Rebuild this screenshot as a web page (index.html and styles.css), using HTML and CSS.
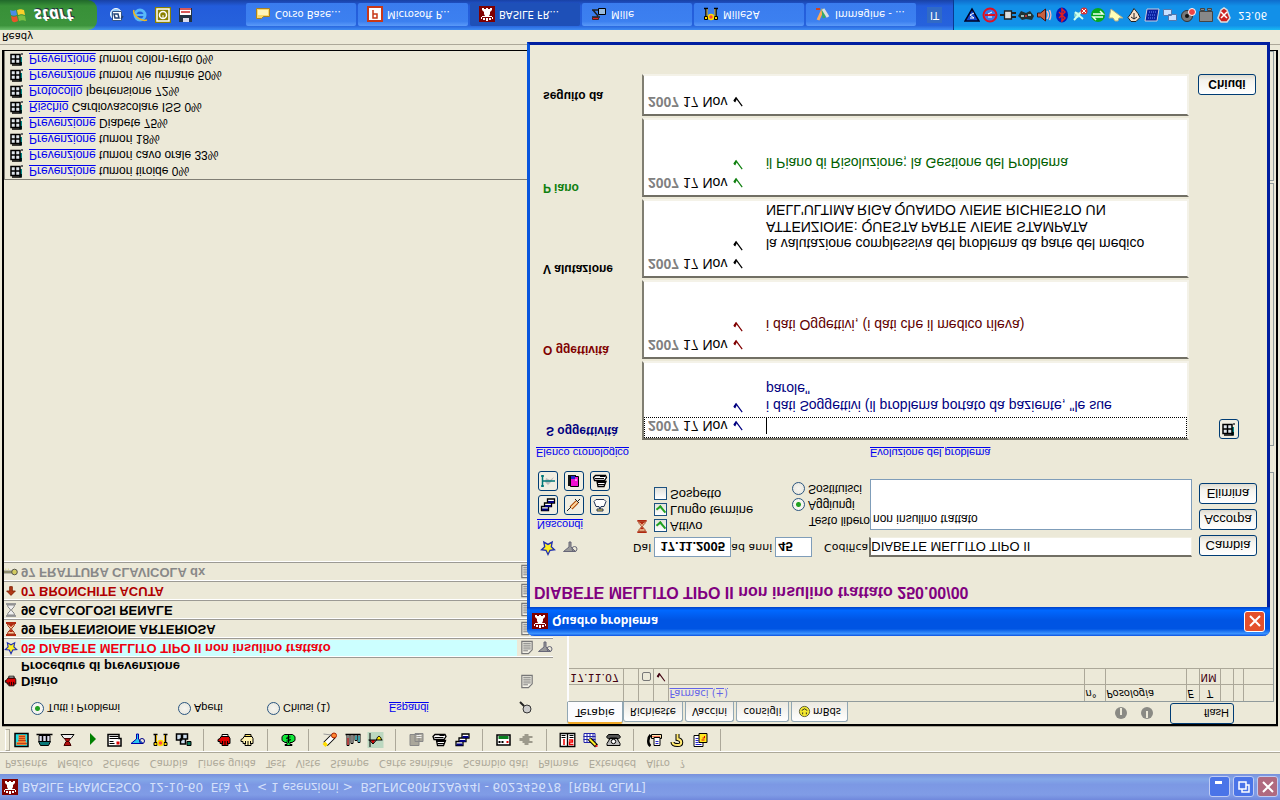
FILE: index.html
```html
<!DOCTYPE html>
<html lang="it">
<head>
<meta charset="utf-8">
<title>BASILE FRANCESCO - Quadro problema</title>
<link rel="stylesheet" href="styles.css">
</head>
<body>
<svg class="defs" aria-hidden="true">
  <symbol id="rook" viewBox="0 0 16 16"><path fill="#800000" d="M0 0h16v16H0z"/><path fill="#fff" d="M2 3h1v2H2zM4 2h2v2H4zM7 1h2v3H7zM10 2h2v2h-2zM13 3h1v2h-1zM3 5h10v1H3zM6 6h4l1 2v2l2 2v2h-2v-1H9v1H7v-1H5v1H3v-2l2-2V8z"/></symbol>
  <symbol id="win" viewBox="0 0 16 16"><path fill="#666" d="M12 12h2v2h-2z"/><path fill="#088" d="M10 2h3v8h-3z"/><path fill="#dfe6ec" stroke="#000" stroke-width="1.500" d="M2 3.500h9v9H2z"/><path stroke="#000" stroke-width="1.500" d="M6.500 3v10M2 8h9M3 2h9v3"/></symbol>
  <symbol id="star" viewBox="0 0 16 16"><path fill="#ffef20" stroke="#2030b0" stroke-width="1.300" d="M8 1.500l2 4.200 4.500.6-3.200 3 .9 4.600L8 11.600l-4.200 2.300.9-4.600-3.200-3 4.500-.6z"/></symbol>
  <symbol id="hgred" viewBox="0 0 12 16"><path fill="#b22810" d="M1 1h10v2H1zM1 13h10v2H1z"/><path fill="#f7c9a0" stroke="#a03818" d="M2.500 3c0 3 3 3.500 3 5s-3 2-3 5h7c0-3-3-3.500-3-5s3-2 3-5z"/><path fill="#b22810" d="M4 5h4L6 8zM3 13l3-3 3 3z"/></symbol>
  <symbol id="hggray" viewBox="0 0 12 16"><path fill="#999" d="M1 1h10v2H1zM1 13h10v2H1z"/><path fill="#eee" stroke="#888" d="M2.500 3c0 3 3 3.500 3 5s-3 2-3 5h7c0-3-3-3.500-3-5s3-2 3-5z"/></symbol>
  <symbol id="uparrow" viewBox="0 0 16 16"><path fill="#b03818" stroke="#802000" d="M8 3l5 5H9.500v5h-3V8H3z"/></symbol>
  <symbol id="key" viewBox="0 0 16 16"><path fill="none" stroke="#555" stroke-width="3" d="M0 8h9"/><path stroke="#d8d890" d="M0 8h9M2 10v2M5 10v2"/><circle cx="12" cy="8" r="3.200" fill="#d4cc60" stroke="#444"/><circle cx="13" cy="8" r="1"/></symbol>
  <symbol id="hand" viewBox="0 0 16 16"><path fill="#e00000" stroke="#000" d="M1.500 8.500v-2h2v-2h2v-2h6v2h2v5l-1 2h-8l-1-2z"/><path stroke="#000" d="M6 4v3M8.500 3v4M11 4v3"/><path fill="#fff" stroke="#000" d="M5.500 11.500h6v2h-6z"/></symbol>
  <symbol id="handy" viewBox="0 0 16 16"><path fill="#fff2b0" stroke="#000" d="M1.500 8.500v-2h2v-2h2v-2h6v2h2v5l-1 2h-8l-1-2z"/><path stroke="#000" d="M6 4v3M8.500 3v4M11 4v3"/><path fill="#ffe860" stroke="#000" d="M5.500 11.500h6v2h-6z"/></symbol>
  <symbol id="note" viewBox="0 0 14 16"><path fill="#f4f2e8" stroke="#777" stroke-width="1.300" d="M1.500 14.500h11v-9l-4-4h-7z"/><path stroke="#777" d="M3 4.500h5M3 6.500h8M3 8.500h8M3 10.500h8M3 12.500h8"/></symbol>
  <symbol id="flask" viewBox="0 0 16 16"><path fill="#999" stroke="#667" d="M7 14V9L1.500 4.500h12L9 9v5z"/><circle cx="12.500" cy="7" r="2.500" fill="none" stroke="#667"/></symbol>
  <symbol id="lens" viewBox="0 0 14 14"><circle cx="8" cy="6" r="4" fill="#ccc" stroke="#333"/><path stroke="#222" stroke-width="2" d="M5 9l-4 4"/></symbol>
  <symbol id="tick" viewBox="0 0 12 14"><path fill="none" stroke="currentColor" stroke-width="1.300" d="M2 7l2 4M4 11l6.500-9"/><path fill="currentColor" d="M1 8l2-2 2 4-1 2z"/></symbol>
  <symbol id="pict" viewBox="0 0 16 16"><path fill="#20e0e8" stroke="#000" stroke-width="1.500" d="M1.500 1.500h13v13h-13z"/><path fill="#f08030" d="M3 3h10v3H3zM5 6h7v7H5z"/><path stroke="#900" stroke-dasharray="1 1" d="M4 4.500h9M5 7.500h7M6 9.500h6M6 11.500h5"/></symbol>
  <symbol id="trolley" viewBox="0 0 18 16"><path fill="#087878" stroke="#000" d="M5 2.500h8l2 4H3z"/><path fill="#dde" stroke="#000" d="M3.500 6.500h11v6h-11z"/><path stroke="#000" stroke-width="1.500" d="M1 13.500h16M7 7v6M11 7v6"/></symbol>
  <symbol id="cup" viewBox="0 0 16 16"><path fill="#eee" stroke="#000" d="M1.500 13.500h13l-3-4h-7z"/><path fill="#b01010" stroke="#400" d="M5 9.500h6l-2-3h-2zM4.500 2.500h7l-2 4h-3z"/></symbol>
  <symbol id="play" viewBox="0 0 16 16"><path fill="#008000" d="M5 3v12l6-6z"/></symbol>
  <symbol id="form" viewBox="0 0 16 16"><path fill="#fff" stroke="#000" stroke-width="1.500" d="M1.500 2h13v7.500h-2v4h-11z"/><path stroke="#000" d="M3 11.500h9M3 9.500h9M3 6.500h4M3 4.500h5"/><path stroke="#d00" stroke-width="3" d="M10 5h3"/></symbol>
  <symbol id="bflask" viewBox="0 0 16 16"><path fill="#28c8f0" stroke="#00a" d="M7 14V9L1.500 4.500h12L9 9v5z"/><circle cx="12.500" cy="7" r="2.500" fill="none" stroke="#008"/></symbol>
  <symbol id="steth" viewBox="0 0 16 16"><path fill="none" stroke="#000" stroke-width="1.500" d="M1 13.500h4M11 13.500h4M3 14V4M13 14V4"/><path stroke="#da0" d="M4 13V5M12 13V5"/><path fill="#ffd800" stroke="#000" d="M1.500 2.500h3v3h-3zM11.500 2.500h3v3h-3z"/><circle cx="8" cy="5" r="2.500" fill="#f44" stroke="#fd0" stroke-width="1.500"/></symbol>
  <symbol id="blocks" viewBox="0 0 18 16"><path fill="#cde" stroke="#000" stroke-width="1.500" d="M2 8h5v6H2zM6 4h5v5H6zM8 9h5v5H8z"/><path fill="#087858" stroke="#000" d="M12.500 2.500h4v4h-4z"/></symbol>
  <symbol id="tree" viewBox="0 0 16 16"><path fill="#10e838" stroke="#000" d="M4 13.500h8l2.500-2v-4l-3-2h-2v-2h2v-1h-7v1h2v2h-2l-3 2v4z"/><path fill="none" stroke="#000" d="M10 11H7l-1-1.500 4-1-1-1.500H6M8 5v8"/></symbol>
  <symbol id="pen" viewBox="0 0 16 16"><path stroke="#000" stroke-width="6" d="M4 4l8 8"/><path stroke="#fff" stroke-width="4" d="M4 4l7 7"/><path stroke="#fd0" stroke-width="4" d="M2.500 2.500L5 5"/><circle cx="12.500" cy="12.500" r="2.500" fill="#f83" stroke="#a20"/><path stroke="#999" d="M2 14l8-1"/></symbol>
  <symbol id="tubes" viewBox="0 0 16 16"><path stroke="#000" stroke-width="1.500" d="M1 13.500h15"/><path fill="#fff" stroke="#000" d="M2.500 2.500h2v11h-2zM6.500 4.500h2v9h-2zM10.500 7.500h2v6h-2zM13.500 5.500h2v8h-2z"/><path stroke="#d00" d="M3.500 3v7"/><path stroke="#0bc" d="M11.500 8v4M14.500 6v6"/></symbol>
  <symbol id="chart" viewBox="0 0 16 16"><path fill="#bcd8c0" d="M0 0h16v16H0z"/><path fill="#d00" d="M3 8h5L5.500 4z"/><path fill="#ffe800" d="M9 8c1 5 4 5 5 0z"/><path fill="none" stroke="#000" d="M2.500 1v14M2 8l3.500-4L9 8c1 5 4 5 5 0M1 8h14"/></symbol>
  <symbol id="gcard" viewBox="0 0 16 16"><path fill="#aaa79b" stroke="#888" d="M1.500 2.500h9v11h-9zM6.500 6.500h8v8h-8z"/><path stroke="#eee" d="M8 10.500h5M8 12.500h5"/></symbol>
  <symbol id="printer" viewBox="0 0 16 16"><path fill="#fff" stroke="#000" stroke-width="1.300" d="M2.500 8.500l-1 3 2 2h10l1-2-2-3zM6 2.500h6l2 5H5z"/><path stroke="#000" d="M3 10.500h9M5 6.500h9M6 4.500h7M8 12.500h5"/></symbol>
  <symbol id="casc" viewBox="0 0 16 16"><path fill="#fff" stroke="#000" stroke-width="1.300" d="M7.500 10h7v4h-7zM4.500 6.500h7v3.500h-7zM1.500 2.500h7v4h-7z"/><path stroke="#000080" stroke-width="2" d="M8 11h6M5 7h6M2 3.500h6"/></symbol>
  <symbol id="device" viewBox="0 0 16 16"><path fill="#fff" stroke="#000" stroke-width="1.500" d="M1.500 3h13v10h-13z"/><path fill="#088020" d="M3 9h10v3H3z"/><path stroke="#000" stroke-width="2" stroke-dasharray="2 1" d="M3 6h5"/><path fill="#d00" d="M11 5h2v2h-2z"/></symbol>
  <symbol id="plug" viewBox="0 0 16 16"><path fill="#9d9a8c" d="M1 7h3V5h2V3h4v2h4v2h-3v3h3v2h-4v2H6v-2H4v-2H1z"/></symbol>
  <symbol id="book" viewBox="0 0 16 16"><path fill="#fff" stroke="#000" stroke-width="1.300" d="M.7 1.500H8v13H.7zM8 1.500h7.300v13H8z"/><path stroke="#000" d="M2 12.500h4M10 12.500h4M2 10.500h4M10 10.500h4"/><path stroke="#e00" stroke-width="1.500" fill="none" d="M4.500 3v6M9.500 8H13V6h-3V3.500h4"/></symbol>
  <symbol id="gridpen" viewBox="0 0 16 16"><path fill="#fff" stroke="#22a" d="M1.500 5.500h11v9h-11zM4.500 5v10M7.500 5v10M10.500 5v10M1 8.500h12M1 11.500h12"/><path stroke="#000" stroke-width="4" d="M7 9l7-7"/><path stroke="#fe2" stroke-width="2" d="M7 9l6-6"/><path fill="#e22" d="M13 1h2v2h-2z"/></symbol>
  <symbol id="phone" viewBox="0 0 16 16"><path fill="#bbb" stroke="#000" d="M1.500 2.500h13v2l-3 5h-7l-3-5z"/><path fill="#555" stroke="#000" d="M1 11l2-2 2 1h6l2-1 2 2-2 2.500H3z"/><circle cx="8" cy="6.500" r="2.200" fill="#fff" stroke="#000"/></symbol>
  <symbol id="fax" viewBox="0 0 16 16"><path fill="none" stroke="#000" stroke-width="2.500" d="M4 2C1 4 1 10 4 13"/><path fill="#ffe8b0" stroke="#000" d="M5 9.500h10v4H5z"/><path fill="#fff" stroke="#000" d="M7.500 2.500h6v8h-6z"/><path stroke="#22c" d="M9 4.500h3M9 6.500h3"/><path stroke="#d00" stroke-dasharray="1 1" d="M6 11.500h8"/></symbol>
  <symbol id="hook" viewBox="0 0 16 16"><path fill="none" stroke="#000" stroke-width="4" d="M8 14V9c5-1 5-6 0-6-3 0-5 1-5 3"/><path fill="none" stroke="#ffe870" stroke-width="2" d="M8 14V9c5-1 5-6 0-6-3 0-5 1-5 3"/></symbol>
  <symbol id="docs" viewBox="0 0 16 16"><path fill="#fff" stroke="#000" d="M1.500 1.500h9v11h-9z"/><path stroke="#22c" d="M3 3.500h6M3 5.500h3M3 7.500h3M3 9.500h3"/><path fill="#ffe820" stroke="#000" d="M6.500 5.500h8v9h-8z"/><path stroke="#d00" d="M9 8h3M10 10h2v2"/></symbol>
  <symbol id="axis" viewBox="0 0 16 16"><path fill="#bbb" d="M5 7l3-3 3 3 3 5-4-3-4 2z"/><path stroke="#077" stroke-width="1.500" fill="none" d="M2.500 2v12M1 3h3M1 13h3M3 8h12"/></symbol>
  <symbol id="door" viewBox="0 0 16 16"><path fill="#111" d="M2 3h8v11H2z"/><path fill="#f010d0" stroke="#000" d="M4.500 2.500h8v10h-8z"/><path fill="#22c" d="M5 10h4v3H5z"/><path stroke="#fff" d="M10 8v2"/></symbol>
  <symbol id="syr" viewBox="0 0 16 16"><path stroke="#a40" stroke-width="4" d="M5 5l6 6"/><path stroke="#ffd8a0" stroke-width="2" d="M5 5l6 6"/><path stroke="#222" d="M1 2l4 4M11 11l3 3M9 14l4-4"/></symbol>
  <symbol id="bulb" viewBox="0 0 16 16"><path fill="#fff" stroke="#235" d="M4 13.500h8l2-2-2-5H9l-1-3-1 3H4l-2 5z"/><path fill="#ffe050" stroke="#235" d="M5 2h6v2H5z"/></symbol>
  <symbol id="smile" viewBox="0 0 14 14"><circle cx="7" cy="7" r="5.500" fill="#f4e830" stroke="#553"/><path stroke="#222" fill="none" d="M5 4v2M9 4v2M4 8l3 2 3-2"/></symbol>
  <symbol id="flag" viewBox="0 0 20 18"><path fill="#e8552a" d="M3 3c2-2 4-1 6 0L8 8C6 7 4 7 2 8z"/><path fill="#7bc043" d="M10 3c3 1 4 1 7 0l-1 5c-3 1-4 1-7 0z"/><path fill="#4a8be8" d="M2 9c2-1 4-1 6 0l-1 5c-2-1-4-1-6 0z"/><path fill="#fbd02a" d="M9 9c3 1 4 1 7 0l-1 5c-3 1-4 1-7 0z"/></symbol>
  <symbol id="mail" viewBox="0 0 16 16"><circle cx="7" cy="9" r="5.500" fill="#8cc8f8" stroke="#fff"/><path fill="#fff" stroke="#358" d="M3.500 2.500h9v9h-9z"/><path stroke="#247" stroke-width="1.500" fill="none" d="M5 9l1-4h4l-1 4zM12 4l2 3"/></symbol>
  <symbol id="ie" viewBox="0 0 16 16"><circle cx="8" cy="8" r="5" fill="none" stroke="#58b8f8" stroke-width="3"/><path stroke="#58b8f8" stroke-width="2" d="M4 8h9"/><path fill="none" stroke="#f0b820" stroke-width="1.500" d="M2 13C0 8 9 1 15 3"/></symbol>
  <symbol id="outl" viewBox="0 0 16 16"><path fill="#8a8000" d="M0 0h16v16H0z"/><path fill="none" stroke="#fff" stroke-width="1.500" d="M2 2h12v12H2z"/><circle cx="8" cy="8" r="3.500" fill="none" stroke="#fff" stroke-width="1.500"/><path stroke="#fff" d="M8 8V5"/></symbol>
  <symbol id="floppy" viewBox="0 0 16 16"><path fill="#234" d="M1 1h13v14H1z"/><path fill="#fff" d="M2 8h11v7H2z"/><path stroke="#c22" stroke-width="1.500" d="M2 14h11M3 11h9"/><path fill="#dde" d="M5 1h6v4H5z"/></symbol>
  <symbol id="folder" viewBox="0 0 16 16"><path fill="#f8d868" stroke="#a88020" d="M1.500 3.500h5l2 2h6v8h-13z"/><path fill="#fff4b8" d="M3 7h10v5H3z"/></symbol>
  <symbol id="ppt" viewBox="0 0 16 16"><path fill="#c83818" d="M0 0h16v16H0z"/><path fill="#fff" d="M2 2h12v12H2z"/><path fill="none" stroke="#c83818" stroke-width="1.500" d="M6 12V4h4v4H6"/></symbol>
  <symbol id="crane" viewBox="0 0 16 16"><path stroke="#222" stroke-width="1.500" fill="none" d="M1 12h7M2 12l5-6M1 5h8"/><path fill="#9bd" stroke="#000" d="M7.500 7.500h7v6h-7z"/><path fill="#d22" stroke="#422" d="M1.500 2.500h6v2h-6z"/></symbol>
  <symbol id="brush" viewBox="0 0 16 16"><path stroke="#fa5" stroke-width="3" d="M3 2l5 11"/><path stroke="#3a6" stroke-width="3" d="M8 13l1-9"/><path stroke="#ddd" stroke-width="3" d="M8 13l5-8"/><path fill="#c42" d="M1 12h4v2H1z"/></symbol>
  <symbol id="t1" viewBox="0 0 16 16"><path fill="#14c" stroke="#002" stroke-width="1.500" d="M1 2h14L8 14z"/><path stroke="#fff" fill="none" d="M10 10L6 8l4-3H6"/></symbol>
  <symbol id="t2" viewBox="0 0 16 16"><circle cx="8" cy="8" r="6.500" fill="#3878e8" stroke="#e01020" stroke-width="2"/><path fill="none" stroke="#e01020" stroke-width="2" d="M3 8h10"/><path fill="none" stroke="#fff" d="M10 11L6 9M10 6H6"/></symbol>
  <symbol id="t3" viewBox="0 0 16 16"><path fill="#ddd" stroke="#222" stroke-width="1.300" d="M4.500 4h7v8h-7z"/><path stroke="#222" stroke-width="2" d="M0 8h4M12 6h4M12 10h4"/></symbol>
  <symbol id="t4" viewBox="0 0 16 16"><path fill="#233" d="M0 7l4-4 4 1 6-1 2 4-4 5-4-2-5 2z"/><path fill="#9bb" d="M3 6h3v2H3zM10 7h3v2h-3z"/><path fill="#b33" d="M7 6h2v2H7z"/></symbol>
  <symbol id="t5" viewBox="0 0 16 16"><path fill="#c86040" stroke="#411" d="M1.500 6h3l5-4v12l-5-4h-3z"/><path fill="none" stroke="#fbb" stroke-width="1.500" d="M11 4c2 3 2 5 0 8M13.500 3c2 4 2 6 0 10"/></symbol>
  <symbol id="t6" viewBox="0 0 16 16"><ellipse cx="8" cy="8" rx="6" ry="7.500" fill="#0418b8"/><path fill="none" stroke="#e02020" stroke-width="1.500" d="M5 5l6 6-3 3V2l3 3-6 6"/></symbol>
  <symbol id="t7" viewBox="0 0 16 16"><circle cx="5" cy="8" r="3" fill="#8cc"/><path stroke="#cfe" stroke-width="2" d="M2 3l8 9M3 11l8-7"/><circle cx="12" cy="12" r="3.500" fill="#d33"/><path stroke="#fff" d="M10 10l4 4M14 10l-4 4"/></symbol>
  <symbol id="t8" viewBox="0 0 16 16"><circle cx="8" cy="8" r="7" fill="#08a820"/><path fill="none" stroke="#efe" stroke-width="1.500" d="M3 9h10l-3 3M13 6H3l3-3"/></symbol>
  <symbol id="t9" viewBox="0 0 16 16"><path fill="#ffffb8" stroke="#aa8" d="M3 14L1 5h4l2-3h3l1 3h4z"/></symbol>
  <symbol id="t10" viewBox="0 0 16 16"><path fill="#f8e0c8" stroke="#222" d="M8 14.500l4-5 2-4-4-4H5l-3 4 3 4z"/><path stroke="#222" fill="none" d="M5 6l3-2 3 2M8 4v6"/></symbol>
  <symbol id="t11" viewBox="0 0 16 16"><path fill="#0820a0" stroke="#ccd" d="M1 2h12l2 12H3z"/><path stroke="#68f" stroke-dasharray="1 1" d="M4 5h8M4 8h8M5 11h8"/></symbol>
  <symbol id="t12" viewBox="0 0 16 16"><path fill="#c8e0ff" stroke="#57a" d="M1.500 7.500h8v6h-8zM6.500 2.500h8v6h-8z"/></symbol>
  <symbol id="t13" viewBox="0 0 16 16"><circle cx="7" cy="7" r="5.500" fill="#777" stroke="#333"/><circle cx="7" cy="7" r="2" fill="#111"/><circle cx="12" cy="11" r="3.500" fill="#e44" stroke="#fff"/></symbol>
  <symbol id="t14" viewBox="0 0 16 16"><path fill="#888" stroke="#444" d="M1.500 1.500h13v10h-13zM2.500 12.500h4v2h-4zM9.500 12.500h4v2h-4z"/></symbol>
  <symbol id="t15" viewBox="0 0 16 16"><path fill="#c22" stroke="#ddd" stroke-width="1.500" d="M2 5l3-4h6l3 4-3 8-3 2-3-2z"/><path stroke="#fff" stroke-width="1.500" d="M5 5l6 6M11 5l-6 6"/></symbol>
  <symbol id="x" viewBox="0 0 16 16"><path stroke="#fff" stroke-width="2" d="M3 3l10 10M13 3L3 13"/></symbol>
  <symbol id="min" viewBox="0 0 16 16"><path fill="#fff" d="M3 11h7v3H3z"/></symbol>
  <symbol id="rest" viewBox="0 0 16 16"><path fill="none" stroke="#fff" stroke-width="1.500" d="M3 6h7v7H3zM6 6V3h7v7h-3"/></symbol>
  <symbol id="circ" viewBox="0 0 14 14"><circle cx="7" cy="7" r="6" fill="#8a8a84"/><path stroke="#ece9d8" stroke-width="2" d="M7 2v7"/></symbol>
</svg>

<div class="screen">
  <header class="titlebar">
    <svg class="ic"><use href="#rook"/></svg>
    <h1>BASILE FRANCESCO&nbsp; 12-10-60&nbsp; Età 47&nbsp; &lt; 1 esenzioni &gt;&nbsp; BSLFNC60R12A944I - 602345678&nbsp; [RBRT GLNT]</h1>
    <button class="wbtn" aria-label="Riduci"><svg><use href="#min"/></svg></button>
    <button class="wbtn" aria-label="Ripristina"><svg><use href="#rest"/></svg></button>
    <button class="wbtn closed" aria-label="Chiudi finestra"><svg><use href="#x"/></svg></button>
  </header>
  <nav class="menu"><span>Paziente</span><span>Medico</span><span>Schede</span><span>Cambia</span><span>Linee guida</span><span>Test</span><span>Viste</span><span>Stampe</span><span>Carte sanitarie</span><span>Scambio dati</span><span>Palmare</span><span>Extended</span><span>Altro</span><span>?</span></nav>
  <div class="toolbar">
    <i class="grip"></i>
    <div class="tg"><svg><use href="#pict"/></svg><svg><use href="#trolley"/></svg><svg><use href="#cup"/></svg><svg class="play"><use href="#play"/></svg><svg><use href="#form"/></svg><svg><use href="#bflask"/></svg><svg><use href="#steth"/></svg><svg><use href="#blocks"/></svg></div>
    <div class="tg"><svg><use href="#hand"/></svg><svg><use href="#handy"/></svg></div>
    <div class="tg"><svg><use href="#tree"/></svg></div>
    <div class="tg"><svg><use href="#pen"/></svg><svg><use href="#tubes"/></svg><svg><use href="#chart"/></svg></div>
    <div class="tg"><svg><use href="#gcard"/></svg><svg><use href="#printer"/></svg><svg><use href="#casc"/></svg></div>
    <div class="tg"><svg><use href="#device"/></svg><svg><use href="#plug"/></svg></div>
    <div class="tg"><svg><use href="#book"/></svg><svg><use href="#gridpen"/></svg><svg><use href="#phone"/></svg></div>
    <div class="tg"><svg><use href="#fax"/></svg><svg><use href="#hook"/></svg><svg><use href="#docs"/></svg></div>
  </div>

  <main class="frame">
    <section class="left">
      <div class="filters">
        <label class="f1"><input type="radio" name="f" checked>Tutti i Problemi</label>
        <label class="f2"><input type="radio" name="f">Aperti</label>
        <label class="f3"><input type="radio" name="f">Chiusi (1)</label>
        <a href="#" class="lk">Espandi</a>
        <svg class="lens"><use href="#lens"/></svg>
      </div>
      <div class="prob plain"><svg class="ic"><use href="#hand"/></svg><b>Diario</b><svg class="nt"><use href="#note"/></svg></div>
      <div class="prob plain last"><i class="ic"></i><b>Procedure di prevenzione</b></div>
      <div class="prob sel"><svg class="ic"><use href="#star"/></svg><b>05 DIABETE MELLITO TIPO II non insulino trattato</b><svg class="nt"><use href="#note"/></svg><svg class="fl"><use href="#flask"/></svg></div>
      <div class="prob"><svg class="ic"><use href="#hgred"/></svg><b>99 IPERTENSIONE ARTERIOSA</b><svg class="nt"><use href="#note"/></svg></div>
      <div class="prob"><svg class="ic"><use href="#hggray"/></svg><b>96 CALCOLOSI RENALE</b><svg class="nt"><use href="#note"/></svg></div>
      <div class="prob red"><svg class="ic"><use href="#uparrow"/></svg><b>07 BRONCHITE ACUTA</b><svg class="nt"><use href="#note"/></svg></div>
      <div class="prob old"><svg class="ic"><use href="#key"/></svg><b>97 FRATTURA CLAVICOLA dx</b><svg class="nt"><use href="#note"/></svg></div>
      <ul class="alerts">
        <li><svg><use href="#win"/></svg><a href="#">Prevenzione</a> tumori tiroide 0%</li>
        <li><svg><use href="#win"/></svg><a href="#">Prevenzione</a> tumori cavo orale 33%</li>
        <li><svg><use href="#win"/></svg><a href="#">Prevenzione</a> tumori 18%</li>
        <li><svg><use href="#win"/></svg><a href="#">Prevenzione</a> Diabete 75%</li>
        <li><svg><use href="#win"/></svg><a href="#">Rischio</a> Cardiovascolare ISS 0%</li>
        <li><svg><use href="#win"/></svg><a href="#">Protocollo</a> Ipertensione 72%</li>
        <li><svg><use href="#win"/></svg><a href="#">Prevenzione</a> tumori vie urinarie 50%</li>
        <li><svg><use href="#win"/></svg><a href="#">Prevenzione</a> tumori colon-retto 0%</li>
      </ul>
    </section>
    <section class="right">
      <div class="tabs">
        <button class="tab on">Terapie</button><button class="tab w1">Richieste</button><button class="tab w2">Vaccini</button><button class="tab w3">consigli</button><button class="tab w4"><svg><use href="#smile"/></svg>mBds</button>
        <div class="tools"><svg class="c1"><use href="#circ"/></svg><svg><use href="#circ"/></svg><button class="btn flash">flasH</button></div>
      </div>
      <div class="pane p1">
        <table>
          <colgroup><col class="k54"><col class="k15"><col class="k15"><col class="k15"><col><col class="k21"><col class="k81"><col class="k13"><col class="k21"><col class="k13"><col class="k10"><col class="k30"></colgroup>
          <tr><th></th><th></th><th></th><th></th><th class="fa"><a href="#">Farmaci (+)</a></th><th>n°</th><th>Posologia</th><th>E</th><th class="t">T</th><th></th><th></th><th></th></tr>
          <tr><td class="m">17.11.07</td><td></td><td><i class="sq"></i></td><td class="m"><svg class="tk"><use href="#tick"/></svg></td><td></td><td></td><td></td><td></td><td class="m nm">NM</td><td></td><td></td><td></td></tr>
        </table>
      </div>
      <div class="pane p2"></div>
      <div class="pane p3"></div>
    </section>
  </main>

  <div class="status">Ready</div>

  <footer class="taskbar">
    <button class="start"><svg><use href="#flag"/></svg>start</button>
    <div class="quick"><svg><use href="#mail"/></svg><svg><use href="#ie"/></svg><svg><use href="#outl"/></svg><svg><use href="#floppy"/></svg></div>
    <div class="tasks">
      <button><svg><use href="#folder"/></svg>Corso Base...</button>
      <button><svg><use href="#ppt"/></svg>Microsoft P...</button>
      <button class="act"><svg><use href="#rook"/></svg>BASILE FR...</button>
      <button><svg><use href="#crane"/></svg>Mille</button>
      <button><svg><use href="#steth"/></svg>MilleSA</button>
      <button><svg><use href="#brush"/></svg>Immagine - ...</button>
    </div>
    <span class="lang">IT</span>
    <div class="tray">
      <svg><use href="#t1"/></svg><svg><use href="#t2"/></svg><svg><use href="#t3"/></svg><svg><use href="#t4"/></svg><svg><use href="#t5"/></svg><svg><use href="#t6"/></svg><svg><use href="#t7"/></svg><svg><use href="#t8"/></svg><svg><use href="#t9"/></svg><svg><use href="#t10"/></svg><svg><use href="#t11"/></svg><svg><use href="#t12"/></svg><svg><use href="#t13"/></svg><svg><use href="#t14"/></svg><svg><use href="#t15"/></svg>
      <span>23.06</span>
    </div>
  </footer>

  <div class="dialog" role="dialog" aria-label="Quadro problema">
    <div class="dtitle"><svg class="ic"><use href="#rook"/></svg><h2>Quadro problema</h2><button class="wbtn x" aria-label="Chiudi dialogo"><svg><use href="#x"/></svg></button></div>
    <div class="dbody">
      <h3>DIABETE MELLITO TIPO II non insulino trattato 250.00/00</h3>
      <div class="form">
        <div class="fa-col">
          <div class="marks"><svg><use href="#star"/></svg><svg><use href="#flask"/></svg></div>
          <a href="#" class="lk">Nascondi</a>
          <div class="six">
            <button class="sb" aria-label="Finestre"><svg><use href="#casc"/></svg></button><button class="sb" aria-label="Terapia"><svg><use href="#syr"/></svg></button><button class="sb" aria-label="Suggerimenti"><svg><use href="#bulb"/></svg></button>
            <button class="sb" aria-label="Grafico"><svg><use href="#axis"/></svg></button><button class="sb" aria-label="Uscita"><svg><use href="#door"/></svg></button><button class="sb" aria-label="Stampa"><svg><use href="#printer"/></svg></button>
          </div>
        </div>
        <div class="fb-col">
          <div class="r1">
            <label for="dal">Dal</label><input id="dal" class="in date" value="17.11.2005">
            <label for="anni">ad anni</label><input id="anni" class="in anni" value="45">
            <label for="cod" class="codl">Codifica</label><input id="cod" class="cod" value="DIABETE MELLITO TIPO II">
          </div>
          <div class="r2">
            <svg class="hg"><use href="#hgred"/></svg>
            <div class="checks">
              <label><input type="checkbox" checked>Attivo</label>
              <label><input type="checkbox" checked>Lungo termine</label>
              <label><input type="checkbox">Sospetto</label>
            </div>
            <div class="modes">
              <label for="tl" class="tl">Testo libero</label>
              <label><input type="radio" name="m" checked>Aggiungi</label>
              <label><input type="radio" name="m">Sostituisci</label>
            </div>
            <textarea id="tl">non insulino trattato</textarea>
          </div>
        </div>
        <div class="fc-col"><button class="btn">Cambia</button><button class="btn">Accorpa</button><button class="btn">Elimina</button></div>
      </div>
      <div class="links"><a href="#" class="lk">Elenco cronologico</a><a href="#" class="lk ev">Evoluzione del problema</a></div>
      <div class="soap">
        <b class="cs ind">S oggettività</b>
        <div class="list cs"><div class="row foc"><time><b>2007</b> 17 Nov</time><svg><use href="#tick"/></svg><i class="caret"></i></div><div class="row txt"><time></time><svg><use href="#tick"/></svg><p>i dati Soggettivi (il problema portato da paziente, "le sue<br>parole"</p></div></div>
        <div class="side"><button class="sb" aria-label="Apri scheda"><svg><use href="#win"/></svg></button></div>

        <b class="co">O ggettività</b>
        <div class="list co"><div class="row"><time><b>2007</b> 17 Nov</time><svg><use href="#tick"/></svg></div><div class="row txt"><time></time><svg><use href="#tick"/></svg><p>i dati Oggettivi, (i dati che il medico rileva)</p></div></div>
        <div class="side"></div>

        <b>V alutazione</b>
        <div class="list"><div class="row"><time><b>2007</b> 17 Nov</time><svg><use href="#tick"/></svg></div><div class="row txt"><time></time><svg><use href="#tick"/></svg><p>la valutazione complessiva del problema da parte del medico<br>ATTENZIONE: QUESTA PARTE VIENE STAMPATA<br>NELL'ULTIMA RIGA QUANDO VIENE RICHIESTO UN</p></div></div>
        <div class="side"></div>

        <b class="cp">P iano</b>
        <div class="list cp"><div class="row"><time><b>2007</b> 17 Nov</time><svg><use href="#tick"/></svg></div><div class="row txt"><time></time><svg><use href="#tick"/></svg><p>il Piano di Risoluzione; la Gestione del Problema</p></div></div>
        <div class="side"></div>

        <b class="seg">seguito da</b>
        <div class="list short"><div class="row"><time><b>2007</b> 17 Nov</time><svg><use href="#tick"/></svg></div></div>
        <div class="side end"><button class="btn chiudi">Chiudi</button></div>
      </div>
    </div>
  </div>
</div>
</body>
</html>
```
FILE: styles.css
```css
* { box-sizing: border-box; }
html, body { margin: 0; height: 100%; overflow: hidden; }
body { background: #ece9d8; font: 12px/16px "Liberation Sans", Arial, sans-serif; color: #000; }
h1, h2, h3, p, ul { margin: 0; padding: 0; }
button, input, textarea { font: inherit; color: inherit; margin: 0; padding: 0; border-radius: 0; outline: 0; }
a { color: #0000f0; text-decoration: underline; }
svg { display: block; width: 16px; height: 16px; flex: none; fill: none; }
.defs { position: absolute; width: 0; height: 0; }
.ic { width: 16px; height: 16px; flex: none; }

/* the whole desktop is shown mirrored top to bottom */
.screen { position: relative; height: 100vh; min-height: 800px; display: flex; flex-direction: column; background: #ece9d8; transform: scaleY(-1); }

.titlebar { display: flex; align-items: center; height: 26px; padding: 0 2px; gap: 3px; background: linear-gradient(#7088dc, #809ce6 20%, #7c98e4 60%, #84a8e8 80%, #7890dc); color: #d4e0fa; flex: none; }
.titlebar h1 { flex: 1; font: 12px/20px "DejaVu Sans", sans-serif; margin-left: 1px; white-space: nowrap; }
.wbtn { width: 21px; height: 21px; border: 1px solid #c0ccf4; border-radius: 3px; background: #4a74e8; display: grid; place-items: center; }
.wbtn.closed { background: #b06a80; }
.wbtn.x { background: #e4502c; border-color: #fff; }

.menu { display: flex; gap: 10px; height: 22px; padding: 0 5px; align-items: center; font: 10px/16px "DejaVu Sans", sans-serif; color: #aca899; border-bottom: 1px solid #aca899; flex: none; white-space: nowrap; }
.toolbar { display: flex; align-items: flex-start; height: 26px; border-top: 1px solid #fff; padding-left: 5px; flex: none; }
.grip { width: 5px; height: 22px; border: 1px solid #aca899; border-left-color: #fff; }
.tg { display: flex; align-items: center; height: 22px; padding: 0 8px 0 9px; border-right: 1px solid #aca899; }
.tg:nth-child(2) { padding-left: 0; }
.tg svg { width: 23px; height: 16px; }
.tg .play { width: 20px; margin-left: 4px; }

.frame { flex: 1; display: flex; border: 2px solid #000; border-bottom-width: 1px; margin: 0 2px 5px; min-height: 0; box-shadow: 0 -1px #aca899; }
.left { width: 563px; flex: none; display: flex; flex-direction: column; }
.filters { display: flex; align-items: center; height: 31px; margin-bottom: 4px; flex: none; font: 11px/16px "Liberation Sans", sans-serif; padding-left: 27px; }
.filters label, .checks label, .modes label { display: flex; align-items: center; gap: 3px; }
.f1 { width: 147px; } .f2 { width: 89px; } .f3 { width: 122px; }
.lens { width: 14px; height: 14px; margin-left: 90px; }
input[type=radio] { appearance: none; width: 13px; height: 13px; border: 1px solid #2a5580; border-radius: 50%; background: radial-gradient(circle, #f6f5f0, #e6e5dc); flex: none; }
input[type=radio]:checked { background: radial-gradient(circle, #22a022 2px, #f6f5f0 3px); }
input[type=checkbox] { appearance: none; width: 13px; height: 13px; border: 1px solid #1c5180; background: linear-gradient(#fff, #e2e2dc); display: grid; place-items: center; flex: none; }
input[type=checkbox]:checked::after { content: ""; width: 4px; height: 7px; border: solid #21a121; border-width: 0 2px 2px 0; transform: rotate(40deg); margin-bottom: 2px; }

.prob { display: flex; align-items: center; height: 19px; border-bottom: 1px solid #9c9a94; box-shadow: 0 1px #fff; margin-right: 14px; font-size: 13px; flex: none; }
.prob.plain { height: 15px; border: 0; box-shadow: none; }
.prob.plain.last { height: 17px; border-bottom: 1px solid #9c9a94; box-shadow: 0 1px #fff; }
.prob .ic { width: 14px; margin-right: 3px; }
.prob b { flex: 1; margin-right: 3px; line-height: 16px; }
.nt { width: 14px; height: 15px; }
.fl { margin-left: 3px; }
.prob .nt:last-child { margin-right: 19px; }
.sel b { background: #ccffff; color: #f00010; }
.red b { color: #b00000; }
.old b { color: #888; }
.alerts { list-style: none; margin-top: auto; border: 1px solid #807e74; border-width: 1px 0 0 1px; }
.alerts li { display: flex; height: 16px; line-height: 16px; padding-left: 4px; white-space: pre; }
.alerts svg { margin-right: 4px; }

.right { flex: 1; display: flex; flex-direction: column; min-width: 0; }
.tabs { display: flex; align-items: flex-end; height: 22px; flex: none; font: 10px/14px "DejaVu Sans", sans-serif; gap: 2px; }
.tab { border: 1px solid #91a7b4; border-bottom: 0; border-radius: 3px 3px 0 0; background: linear-gradient(#fff, #ece9e0); height: 20px; width: 60px; display: flex; align-items: center; justify-content: center; gap: 2px; }
.tab svg { width: 13px; height: 13px; }
.tab.on { border-top: 2px solid #f0a828; background: #fcfcfe; width: 56px; height: 22px; font-size: 11px; margin-right: -2px; }
.w2 { width: 49px; } .w3 { width: 53px; } .w4 { width: 57px; }
.tools { margin-left: auto; margin-right: 42px; display: flex; align-items: center; align-self: flex-start; gap: 12px; height: 21px; }
.tools svg { width: 14px; height: 14px; }
.c1 { transform: scaleY(-1); }
.btn { width: 58px; height: 21px; border: 1px solid #003c74; border-radius: 3px; background: linear-gradient(#fff, #f4f3ee 70%, #dedbd0); font: 13px/16px "Liberation Sans", sans-serif; }
.flash { width: 64px; font-size: 11px; text-align: right; padding-right: 4px; background: #ece9d8; margin-left: 4px; }
.pane { border: 1px solid #919b9c; border-left: 2px solid #fcfcfe; margin-right: 2px; }
.p1 { height: 230px; margin-bottom: 26px; flex: none; }
.p2 { flex: 1; margin-bottom: 2px; }
.p3 { height: 130px; flex: none; }
table { border-collapse: collapse; table-layout: fixed; width: 100%; font: 10px/14px "DejaVu Sans", sans-serif; }
th { font-weight: 400; font-style: italic; text-align: left; }
th, td { height: 16px; padding: 0 1px; border: solid #aca899; border-width: 0 1px 1px 0; overflow: hidden; white-space: nowrap; }
th:last-child, td:last-child { border-right: 0; }
.fa { font-style: normal; } .fa a { color: #6464e8; } .t { text-align: center; }
.m { color: #400010; } .m:first-child { font-size: 11px; }
.k54 { width: 54px; } .k15 { width: 15px; } .k21 { width: 21px; } .k81 { width: 81px; } .k13 { width: 13px; } .k10 { width: 10px; } .k30 { width: 30px; }
.sq { display: block; width: 9px; height: 9px; border: 1px solid #777; border-radius: 2px; margin-left: 2px; }
.tk { width: 12px; height: 12px; }

.status { height: 15px; flex: none; font: 10px/15px "DejaVu Sans", sans-serif; border-top: 1px solid #aca899; padding-left: 2px; }

.taskbar { height: 30px; flex: none; display: flex; align-items: stretch; background: linear-gradient(#3f8cf3, #2662dc 15%, #235cdb 80%, #1941a5); color: #fff; font: 10px/16px "DejaVu Sans", sans-serif; }
.taskbar button { border: 0; color: #fff; display: flex; align-items: center; }
.start { width: 97px; background: linear-gradient(#6cbf6c, #3c943c 15%, #389038 80%, #20682a); border-radius: 0 9px 9px 0; font: italic 700 17px/24px "Open Sans", sans-serif; padding-left: 9px; gap: 5px; text-shadow: 1px 1px #234; }
.start svg { width: 20px; height: 20px; }
.quick { display: flex; align-items: center; width: 149px; padding-left: 12px; gap: 7px; }
.tasks { display: flex; gap: 2px; padding: 4px 0 3px; flex: none; }
.tasks button { width: 110px; background: linear-gradient(#5a9af8, #3c80f0 20%, #3a7cee); border-radius: 2px; padding-left: 9px; gap: 4px; font: inherit; }
.tasks .act { background: #1e50b8; }
.lang { align-self: center; background: #316ac5; width: 15px; text-align: center; margin: 0 auto; }
.tray { width: 327px; background: linear-gradient(#19b9f3, #1290e8 15%, #1290e8 80%, #0f6ccc); border-left: 1px solid #0a3a90; display: flex; align-items: center; gap: 2px; padding: 0 13px 0 10px; }
.tray span { margin-left: auto; font-size: 10px; }

.dialog { position: absolute; left: 527px; right: 10px; top: 164px; border: solid #0831d9; border-width: 0 3px 3px; border-color: #0831d9 #001ea0 #001ea0 #0855dd; border-radius: 7px 7px 0 0; background: #ece9d8; }
.dtitle { display: flex; align-items: center; height: 29px; margin: 0 -3px; padding: 0 5px; gap: 4px; border-radius: 7px 7px 0 0; background: linear-gradient(#0a50e0, #3c94ff 8%, #0054e3 25%, #0054e3 55%, #0068ff 88%, #0040c8); color: #fff; }
.dtitle h2 { flex: 1; font: 700 12px/20px "Open Sans", sans-serif; }
.dbody { padding: 5px 10px 29px 4px; }
h3 { font: 700 16px/20px "Liberation Sans", sans-serif; color: #800080; margin-bottom: 25px; white-space: nowrap; }
.form { display: flex; }
.fa-col { width: 99px; flex: none; }
.marks { display: flex; gap: 6px; padding: 1px 6px 0; height: 25px; }
.lk { font-size: 11px; line-height: 14px; display: block; }
.fa-col .lk { margin: 0 3px; width: max-content; }
.six { display: grid; grid-template-columns: repeat(3, 20px); gap: 4px 6px; padding: 3px 4px 0; }
.sb { width: 20px; height: 20px; border: 1px solid #003c74; border-radius: 3px; background: #f0eee2; display: grid; place-items: center; }
.fb-col { flex: 1; min-width: 0; }
.r1 { display: flex; align-items: center; height: 20px; font: 11px/16px "DejaVu Sans", sans-serif; white-space: nowrap; }
.in { border: 1px solid #7f9db9; background: #fff; height: 20px; font: 700 13px/16px "Liberation Sans", sans-serif; }
.date { width: 77px; text-align: center; margin-left: 3px; }
.anni { width: 37px; padding-left: 2px; margin-left: 3px; }
.codl { width: 56px; text-align: right; }
.cod { flex: 1; min-width: 0; height: 20px; font: 13px/16px "Liberation Sans", sans-serif; background: #fff; border: 1px solid #f1efe2; border-top: 2px solid #716f64; border-left: 2px solid #716f64; margin-left: 1px; }
.r2 { display: flex; align-items: flex-start; margin-top: 3px; }
.hg { width: 12px; height: 15px; margin: 0 6px 0 3px; }
.checks { width: 138px; flex: none; font-size: 13px; display: grid; grid-auto-rows: 16px; }
.modes { width: 78px; flex: none; display: grid; grid-auto-rows: 16px; padding-top: 5px; }
.modes .tl { justify-content: flex-end; }
textarea { flex: 1; min-width: 0; height: 51px; margin-top: 4px; border: 1px solid #7f9db9; background: #fff; resize: none; padding: 2px; font: 12px/16px "Liberation Sans", sans-serif; }
.fc-col { width: 65px; padding: 1px 0 0 7px; display: flex; flex-direction: column; gap: 5px; flex: none; }
.links { display: flex; margin-top: 11px; height: 20px; padding-left: 2px; }
.links .lk { width: 334px; }
.soap { display: grid; grid-template-columns: 108px 1fr 68px; row-gap: 2px; }
.soap > b { font-size: 12px; line-height: 16px; padding: 1px 0 0 9px; }
.soap > .ind { padding-left: 12px; }
.soap > .seg { padding-top: 12px; }
.cs { color: #000080; } .co { color: #800000; } .cp { color: #108010; }
.list { height: 79px; background: #fff; border: 2px solid #f4f2e8; border-top-color: #716f64; border-left-color: #807e72; font-size: 14px; overflow: hidden; }
.list.short { height: 42px; }
.row { display: flex; height: 21px; align-items: center; padding: 3px 0 0 4px; line-height: 17px; }
.row.foc { outline: 1px dotted #000; outline-offset: -1px; }
.row.txt { height: auto; align-items: flex-start; }
.row time { width: 84px; color: #000; white-space: nowrap; }
.row time b { color: #808080; }
.row svg { width: 12px; height: 13px; margin-right: 22px; }
.row p { white-space: nowrap; }
.cp p { color: #006000; } .co p { color: #600000; }
.caret { width: 1px; height: 17px; background: #000; }
.side { padding: 1px 0 0 30px; }
.side.end { padding: 0 0 0 9px; align-self: end; }
.chiudi { font-weight: 700; font-size: 12px; }
```
